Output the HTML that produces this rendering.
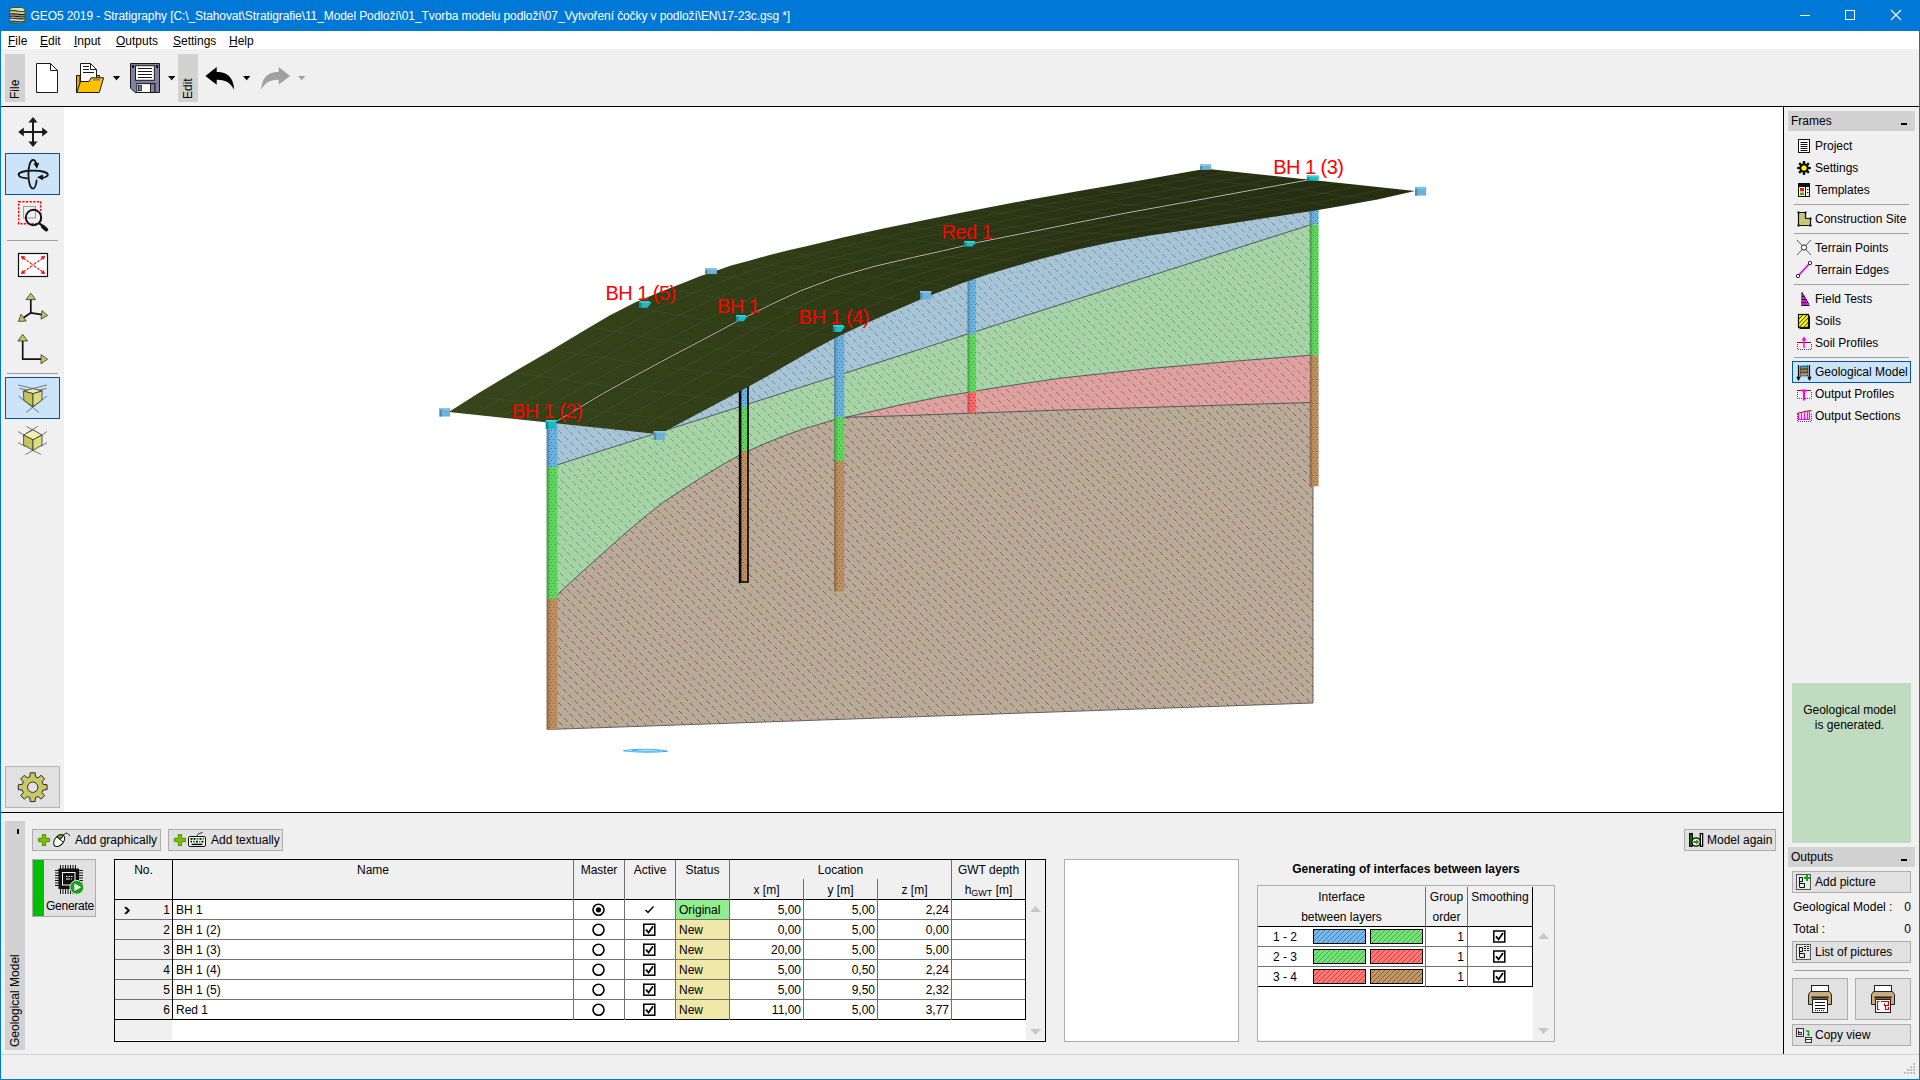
<!DOCTYPE html>
<html lang="en">
<head>
<meta charset="utf-8">
<title>GEO5 2019 - Stratigraphy</title>
<style>
html,body{margin:0;padding:0;}
body{width:1920px;height:1080px;overflow:hidden;background:#f0f0f0;font-family:"Liberation Sans",sans-serif;font-size:12px;color:#000;position:relative;}
.abs{position:absolute;}
.t{position:absolute;white-space:nowrap;line-height:16px;height:16px;}
#titlebar{left:0;top:0;width:1920px;height:31px;background:#0078d7;}
#titletext{left:30.5px;top:8px;color:#fff;font-size:12px;letter-spacing:-0.097px;}
#menubar{left:1px;top:31px;width:1918px;height:18px;background:#fff;}
#menubar .t{top:2px;}
#menubar .m::first-letter{text-decoration:underline;text-underline-offset:1px;}
#toolbar{left:1px;top:50px;width:1918px;height:56px;background:#f0f0f0;}
.hline{position:absolute;height:1px;background:#000;}
.vline{position:absolute;width:1px;background:#000;}
.tab{position:absolute;background:#d2d2d2;}
.vt{position:absolute;white-space:nowrap;transform-origin:0 0;transform:rotate(-90deg);line-height:16px;height:16px;}
#lefttb{left:1px;top:107px;width:63px;height:705px;background:#f0f0f0;}
#view{left:64px;top:107px;width:1719px;height:705px;background:#fff;}
#rightp{left:1784px;top:107px;width:135px;height:946px;background:#f0f0f0;}
#bottomp{left:1px;top:813px;width:1782px;height:240px;background:#f0f0f0;}
#status{left:1px;top:1054px;width:1918px;height:25px;background:#f0f0f0;border-top:1px solid #d2d2d2;box-sizing:border-box;}
.bl{position:absolute;background:#0078d7;}
.btn{position:absolute;background:#e1e1e1;border:1px solid #adadad;box-sizing:border-box;}
.sel{position:absolute;background:#cce4f7;border:1px solid #005499;box-sizing:border-box;}
.fi{left:31px;}
.sep{position:absolute;height:1px;background:#a0a0a0;}
</style>
</head>
<body>
<!-- TITLE BAR -->
<div id="titlebar" class="abs">
  <svg class="abs" style="left:0;top:0" width="1920" height="31" viewBox="0 0 1920 31">
    <defs><clipPath id="icoclip"><rect x="9.5" y="7.5" width="15.5" height="15.5" rx="3.2"/></clipPath></defs>
    <rect x="9.5" y="7.5" width="15.5" height="15.5" rx="3.4" fill="#16180f"/>
    <g clip-path="url(#icoclip)">
      <path d="M9 7H26V10.6Q21 11.4 17 10.4T9 10.4Z" fill="#dcdfba"/>
      <path d="M9 11.4Q13 10.6 17 11.4T26 11.6V13.6Q21 14.4 17 13.6T9 13.6Z" fill="#c6cf8c"/>
      <path d="M9 14.5Q13 13.9 17 14.6T26 14.6V16Q21 16.8 17 16.1T9 16.1Z" fill="#8e8e8e"/>
      <path d="M9 16.9Q13 16.3 17 17T26 16.9V18.2Q21 18.9 17 18.3T9 18.4Z" fill="#a4a4a4"/>
      <path d="M9 19.2Q13 18.5 17 19.2T26 19.1V20.8Q21 21.6 17 20.9T9 21Z" fill="#dedede"/>
      <path d="M9 21.8Q13 21.2 17 21.8T26 21.7V24H9Z" fill="#9a9a9a"/>
    </g>
    <rect x="9.5" y="7.5" width="15.5" height="15.5" rx="3.4" fill="none" stroke="#2c5c14" stroke-width="0.9"/>
    <path d="M1800 15.5H1810" stroke="#fff" stroke-width="1"/>
    <rect x="1845.5" y="10.5" width="9" height="9" fill="none" stroke="#fff" stroke-width="1"/>
    <path d="M1891 10L1901 20M1901 10L1891 20" stroke="#fff" stroke-width="1.1"/>
  </svg>
  <div id="titletext" class="t">GEO5 2019 - Stratigraphy [C:\_Stahovat\Stratigrafie\11_Model Podloží\01_Tvorba modelu podloží\07_Vytvoření čočky v podloží\EN\17-23c.gsg *]</div>
</div>
<!-- MENU BAR -->
<div id="menubar" class="abs">
  <div class="t m" style="left:7px">File</div>
  <div class="t m" style="left:39px">Edit</div>
  <div class="t m" style="left:73px">Input</div>
  <div class="t m" style="left:115px">Outputs</div>
  <div class="t m" style="left:172px">Settings</div>
  <div class="t m" style="left:228px">Help</div>
</div>
<!-- TOOLBAR -->
<div id="toolbar" class="abs">
  <div class="tab" style="left:4px;top:4px;width:20px;height:48px"></div>
  <div class="vt" style="left:6px;top:49px">File</div>
  <div class="tab" style="left:177px;top:4px;width:20px;height:48px"></div>
  <div class="vt" style="left:179px;top:49px">Edit</div>
  <svg class="abs" style="left:-1px;top:0" width="400" height="56" viewBox="0 50 400 56">
    <!-- new -->
    <path d="M36.5 63.5H50.5L57.5 70.5V92.5H36.5Z" fill="#fff" stroke="#1a1a1a" stroke-width="1"/>
    <path d="M50.5 63.5V70.5H57.5" fill="none" stroke="#1a1a1a" stroke-width="1"/>
    <!-- open -->
    <path d="M76.5 75.5H99.5V79H76.5Z" fill="#e9a400" stroke="#1a1a1a" stroke-width="1"/>
    <path d="M76.5 75.5V92.5H80V75.5Z" fill="#e9a400" stroke="#1a1a1a" stroke-width="1"/>
    <path d="M80.5 63.5H90.5L96.5 69.5V84H80.5Z" fill="#fff" stroke="#1a1a1a" stroke-width="1"/>
    <path d="M90.5 63.5V69.5H96.5" fill="none" stroke="#1a1a1a" stroke-width="1"/>
    <path d="M83 66.5H89M83 69.5H89M83 72.5H94" stroke="#1a1a1a" stroke-width="1"/>
    <path d="M76.8 92.5L80.5 81.5H89L91 77.8H103.6L99.3 92.5Z" fill="#ffc000" stroke="#1a1a1a" stroke-width="1" stroke-linejoin="round"/>
    <rect x="93" y="79" width="7" height="1.6" fill="#8080a0"/>
    <path d="M112.8 76H120.2L116.5 80.3Z" fill="#000"/>
    <!-- save -->
    <path d="M130.5 63.5H159.5V92.5H135L130.5 88Z" fill="#8080a0" stroke="#1a1a1a" stroke-width="1"/>
    <rect x="135.5" y="65.7" width="18.8" height="14.6" fill="#fff" stroke="#1a1a1a" stroke-width="1"/>
    <path d="M138 68.5H152M138 71.5H152M138 74.5H152M138 77.5H152" stroke="#1a1a1a" stroke-width="1"/>
    <rect x="132" y="65" width="1.8" height="3" fill="#000"/><rect x="156.2" y="65" width="1.8" height="3" fill="#000"/>
    <rect x="136.8" y="83.6" width="18" height="8.9" fill="#fff" stroke="#1a1a1a" stroke-width="1"/>
    <rect x="138.5" y="85.3" width="2.8" height="5.4" fill="#8080a0" stroke="#1a1a1a" stroke-width="0.9"/>
    <rect x="150.5" y="83.6" width="4.3" height="8.9" fill="#8080a0" stroke="#1a1a1a" stroke-width="1"/>
    <path d="M168 76H175.4L171.7 80.3Z" fill="#000"/>
    <!-- undo -->
    <path d="M205.4 76.1L216.7 66.9V71.9C226 71.5 233.5 76 234.2 89.8C230.5 83 226 79.6 216.7 79.8V84.8Z" fill="#000"/>
    <path d="M243 76H250.4L246.7 80.3Z" fill="#000"/>
    <!-- redo -->
    <path d="M290 76.1L278.7 66.9V71.9C269.4 71.5 261.9 76 261.2 89.8C264.9 83 269.4 79.6 278.7 79.8V84.8Z" fill="#a0a0a0"/>
    <path d="M298 76H305.4L301.7 80.3Z" fill="#a0a0a0"/>
  </svg>
</div>
<div class="hline" style="left:1px;top:106px;width:1918px"></div>
<!-- LEFT TOOLBAR -->
<div id="lefttb" class="abs">
  <div class="sel" style="left:4px;top:46px;width:55px;height:42px"></div>
  <div class="sel" style="left:4px;top:270px;width:55px;height:42px"></div>
  <div class="sep" style="left:6px;top:133px;width:51px"></div>
  <div class="sep" style="left:6px;top:266px;width:51px"></div>
  <div class="btn" style="left:4px;top:659px;width:55px;height:42px;border-color:#b4b4b4"></div>
  <svg class="abs" style="left:-1px;top:0" width="64" height="705" viewBox="0 107 64 705">
    <!-- move -->
    <g fill="#1a1a1a" stroke="none">
      <path d="M32 121.5H34V142.5H32Z"/><path d="M22.5 131H43.5V133H22.5Z"/>
      <path d="M33 117L37.6 122.6H28.4Z"/><path d="M33 147L37.6 141.4H28.4Z"/>
      <path d="M18.2 132L23.8 127.4V136.6Z"/><path d="M47.8 132L42.2 127.4V136.6Z"/>
    </g>
    <!-- rotate -->
    <g fill="none" stroke="#111" stroke-width="1.8" stroke-linecap="round">
      <path d="M41 178.2C45.5 177.4 47.8 176 47.8 174.7C47.8 172.3 41.5 170.7 33 170.7C24.5 170.7 18.6 172.4 18.6 174.7C18.6 176.5 22 177.8 27 178.3"/>
      <path d="M36.2 163.5C35.5 161.2 34.3 159.8 33 159.8C30.4 159.8 28.4 166 28.4 174.2C28.4 182.4 30.4 188.6 33 188.6C34.7 188.6 36 185.5 36.6 180.5"/>
    </g>
    <path d="M33.4 163.4L39.2 162.8L37 168.8Z" fill="#111"/>
    <path d="M37 177.3L42.8 174.4L43 180.3Z" fill="#111"/>
    <!-- zoom window -->
    <rect x="18.7" y="201.7" width="22" height="22" fill="none" stroke="#f00" stroke-width="1.4" stroke-dasharray="2.2 1.45"/>
    <rect x="23.5" y="206.5" width="12" height="11.5" fill="none" stroke="#a0a0a0" stroke-width="1.1"/>
    <circle cx="33.5" cy="217.5" r="7.7" fill="none" stroke="#111" stroke-width="1.9"/>
    <path d="M39.3 223.3L43 226.6" stroke="#111" stroke-width="2" stroke-linecap="round"/>
    <path d="M42.8 226.5L46.3 229.6" stroke="#111" stroke-width="3.8" stroke-linecap="round"/>
    <!-- fit -->
    <rect x="18.5" y="253.5" width="29" height="23" fill="#fff" stroke="#111" stroke-width="1.2"/>
    <g stroke="#f00" stroke-width="1.1" stroke-dasharray="2.2 1.4" fill="none">
      <path d="M31.5 263.8L23 258M34.5 263.8L43 258M31.5 266.2L23 272M34.5 266.2L43 272"/>
    </g>
    <g fill="#f00"><path d="M20.8 256L25.4 256.6L22.6 260Z"/><path d="M45.2 256L40.6 256.6L43.4 260Z"/><path d="M20.8 274L25.4 273.4L22.6 270Z"/><path d="M45.2 274L40.6 273.4L43.4 270Z"/></g>
    <path d="M32 263.8V266.2M34 263.8V266.2" stroke="#f00" stroke-width="0.9"/>
    <!-- 3 axis -->
    <g stroke="#111" stroke-width="1.7" fill="none" stroke-linecap="round"><path d="M30.8 312.8V299M30.8 312.8L22.5 318.5M30.8 312.8L42 314.6"/></g>
    <g fill="#c4c45c" stroke="#333" stroke-width="0.8" stroke-linejoin="round">
      <path d="M30.8 293.2L35.6 299.6H26Z"/><path d="M18.4 321.4L21 314.2L26.2 321Z"/><path d="M47.6 315.4L41 319.2L42 310.6Z"/>
    </g>
    <!-- L axis -->
    <path d="M22.7 340.5V359.2H41" stroke="#111" stroke-width="1.7" fill="none"/>
    <g fill="#c4c45c" stroke="#333" stroke-width="0.8" stroke-linejoin="round">
      <path d="M22.7 334.4L27.6 341H17.8Z"/><path d="M47.6 359.2L41 363.8V354.6Z"/>
    </g>
    <!-- perspective cube -->
    <g stroke="#555" stroke-width="0.8" fill="none">
      <path d="M18 385L33 388.5L47 385M19.5 388.5L33 391.2L46.5 388.5M18.5 396L39 412.5M47 396L26 412.5"/>
    </g>
    <g stroke="#333" stroke-width="0.8" stroke-linejoin="round">
      <path d="M23.5 391.2L33 388.6L42.2 391L33 393.6Z" fill="#f0f0b0"/>
      <path d="M23.5 391.2L33 393.6V406.6L23.8 400.4Z" fill="#c4c45c"/>
      <path d="M42.2 391L33 393.6V406.6L41.8 400.2Z" fill="#dcdc80"/>
    </g>
    <!-- iso cube -->
    <g stroke="#555" stroke-width="0.8" fill="none">
      <path d="M26.5 426.5L39 433.5M37.5 426.5L26 433.5M18 431.5L24 435M47 431.5L42 435M18 442.5L25 446.5M47 442.5L41 446.5M25.5 454.5L33 450.4L41 454.5"/>
    </g>
    <g stroke="#333" stroke-width="0.8" stroke-linejoin="round">
      <path d="M23.6 435L33 429.8L42 435L33 439.8Z" fill="#f0f0b0"/>
      <path d="M23.6 435L33 439.8V450.4L23.6 445Z" fill="#c4c45c"/>
      <path d="M42 435L33 439.8V450.4L42 445Z" fill="#dcdc80"/>
    </g>
    <!-- gear -->
    <g transform="translate(32.7 787.2)">
      <path d="M-2.78 -10.44L-2.47 -14.39L2.47 -14.39L2.78 -10.44L5.42 -9.34L8.43 -11.92L11.92 -8.43L9.34 -5.42L10.44 -2.78L14.39 -2.47L14.39 2.47L10.44 2.78L9.34 5.42L11.92 8.43L8.43 11.92L5.42 9.34L2.78 10.44L2.47 14.39L-2.47 14.39L-2.78 10.44L-5.42 9.34L-8.43 11.92L-11.92 8.43L-9.34 5.42L-10.44 2.78L-14.39 2.47L-14.39 -2.47L-10.44 -2.78L-9.34 -5.42L-11.92 -8.43L-8.43 -11.92L-5.42 -9.34Z M5.2 0A5.2 5.2 0 1 0 -5.2 0A5.2 5.2 0 1 0 5.2 0Z" fill="#c8c864" stroke="#2a2a2a" stroke-width="1" stroke-linejoin="round" fill-rule="evenodd"/>
    </g>
  </svg>
</div>
<!-- 3D VIEW -->
<div id="view" class="abs">
<svg class="abs" style="left:0;top:0" width="1719" height="705" viewBox="64 107 1719 705">
<defs>
<pattern id="hb" width="7.6" height="13.8" patternUnits="userSpaceOnUse" patternTransform="rotate(45)"><path d="M0 0.5H5.2M3.6 7.4H7.6M0 7.4H1.2" stroke="#4a86b4" stroke-width="0.9"/></pattern>
<pattern id="hg" width="7.6" height="13.8" patternUnits="userSpaceOnUse" patternTransform="rotate(45)"><path d="M0 0.5H5.2M3.6 7.4H7.6M0 7.4H1.2" stroke="#46a546" stroke-width="0.9"/></pattern>
<pattern id="hr" width="7.6" height="13.8" patternUnits="userSpaceOnUse" patternTransform="rotate(45)"><path d="M0 0.5H5.2M3.6 7.4H7.6M0 7.4H1.2" stroke="#c84646" stroke-width="0.9"/></pattern>
<pattern id="hn" width="7.6" height="13.8" patternUnits="userSpaceOnUse" patternTransform="rotate(45)"><path d="M0 0.5H5.2M3.6 7.4H7.6M0 7.4H1.2" stroke="#73532c" stroke-width="0.9"/></pattern>
<pattern id="db" width="4" height="6" patternUnits="userSpaceOnUse"><rect x="1" y="1" width="1" height="1" fill="#1f7ed0"/><rect x="3" y="4" width="1" height="1" fill="#1f7ed0"/></pattern>
<pattern id="dg" width="4" height="6" patternUnits="userSpaceOnUse"><rect x="1" y="1" width="1" height="1" fill="#18b818"/><rect x="3" y="4" width="1" height="1" fill="#18b818"/></pattern>
<pattern id="dr" width="4" height="6" patternUnits="userSpaceOnUse"><rect x="1" y="1" width="1" height="1" fill="#e81818"/><rect x="3" y="4" width="1" height="1" fill="#e81818"/></pattern>
<pattern id="dn" width="4" height="6" patternUnits="userSpaceOnUse"><rect x="1" y="1" width="1" height="1" fill="#a05c14"/><rect x="3" y="4" width="1" height="1" fill="#a05c14"/></pattern>
<linearGradient id="tg" gradientUnits="userSpaceOnUse" x1="450" y1="0" x2="1415" y2="0"><stop offset="0" stop-color="#36451a"/><stop offset="0.35" stop-color="#303d16"/><stop offset="0.7" stop-color="#283212"/><stop offset="1" stop-color="#252e10"/></linearGradient>
<linearGradient id="bhs" x1="0" y1="0" x2="1" y2="0"><stop offset="0" stop-color="#000" stop-opacity="0.32"/><stop offset="0.22" stop-color="#000" stop-opacity="0.1"/><stop offset="0.4" stop-color="#000" stop-opacity="0"/></linearGradient>
</defs>
<defs><path id="hl" d="M-9.66 172.34l570 570M-1.58 171.42l570 570M10.26 173.26l570 570M21.10 175.10l570 570M26.50 170.50l570 570M35.50 170.50l570 570M48.18 174.18l570 570M54.50 170.50l570 570M65.34 172.34l570 570M77.18 174.18l570 570M82.50 170.50l570 570M95.18 174.18l570 570M102.42 171.42l570 570M110.50 170.50l570 570M120.50 170.50l570 570M132.26 173.26l570 570M141.26 173.26l570 570M148.50 170.50l570 570M158.42 171.42l570 570M167.50 170.50l570 570M180.18 174.18l570 570M188.26 173.26l570 570M195.50 170.50l570 570M208.18 174.18l570 570M214.50 170.50l570 570M224.42 171.42l570 570M237.10 175.10l570 570M247.10 175.10l570 570M255.18 174.18l570 570M261.50 170.50l570 570M274.18 174.18l570 570M283.18 174.18l570 570M292.26 173.26l570 570M298.50 170.50l570 570M309.42 171.42l570 570M317.50 170.50l570 570M330.18 174.18l570 570M337.42 171.42l570 570M347.34 172.34l570 570M358.26 173.26l570 570M365.42 171.42l570 570M377.18 174.18l570 570M383.50 170.50l570 570M396.18 174.18l570 570M404.34 172.34l570 570M415.18 174.18l570 570M425.10 175.10l570 570M431.42 171.42l570 570M439.50 170.50l570 570M453.18 174.18l570 570M462.18 174.18l570 570M472.10 175.10l570 570M478.42 171.42l570 570M488.34 172.34l570 570M496.50 170.50l570 570M509.18 174.18l570 570M519.10 175.10l570 570M524.50 170.50l570 570M537.18 174.18l570 570M543.50 170.50l570 570M556.18 174.18l570 570M562.42 171.42l570 570M574.26 173.26l570 570M585.10 175.10l570 570M594.18 174.18l570 570M602.26 173.26l570 570M610.34 172.34l570 570M621.26 173.26l570 570M631.18 174.18l570 570M640.26 173.26l570 570M648.34 172.34l570 570M657.34 172.34l570 570M666.42 171.42l570 570M675.42 171.42l570 570M689.10 175.10l570 570M694.42 171.42l570 570M702.50 170.50l570 570M716.18 174.18l570 570M723.34 172.34l570 570M735.18 174.18l570 570M743.26 173.26l570 570M751.34 172.34l570 570M764.10 175.10l570 570M771.26 173.26l570 570M780.34 172.34l570 570M791.18 174.18l570 570M796.50 170.50l570 570M806.50 170.50l570 570M819.18 174.18l570 570M828.26 173.26l570 570M835.42 171.42l570 570M845.34 172.34l570 570M854.42 171.42l570 570M865.26 173.26l570 570M875.26 173.26l570 570M881.50 170.50l570 570M895.10 175.10l570 570M900.50 170.50l570 570M913.18 174.18l570 570M923.18 174.18l570 570M930.34 172.34l570 570M939.34 172.34l570 570M952.10 175.10l570 570M958.34 172.34l570 570M970.18 174.18l570 570M978.26 173.26l570 570M988.18 174.18l570 570M997.26 173.26l570 570M1003.50 170.50l570 570M1013.50 170.50l570 570M1024.34 172.34l570 570M1034.26 173.26l570 570M1046.10 175.10l570 570M1055.10 175.10l570 570M1060.50 170.50l570 570M1069.50 170.50l570 570M1083.10 175.10l570 570M1093.10 175.10l570 570M1099.34 172.34l570 570M1112.10 175.10l570 570M1120.18 174.18l570 570M1130.10 175.10l570 570M1138.26 173.26l570 570M1146.34 172.34l570 570M1159.10 175.10l570 570M1166.26 173.26l570 570M1177.10 175.10l570 570M1184.34 172.34l570 570M1191.50 170.50l570 570M1204.26 173.26l570 570M1212.34 172.34l570 570M1220.42 171.42l570 570M1233.18 174.18l570 570M1238.50 170.50l570 570M1251.26 173.26l570 570M1257.50 170.50l570 570M1267.42 171.42l570 570M1278.34 172.34l570 570M1286.42 171.42l570 570M1300.10 175.10l570 570M1305.42 171.42l570 570" fill="none" stroke-width="1" stroke-opacity="0.72" stroke-dasharray="5 3"/></defs>
<clipPath id="chn"><polygon points="548.0,423.0 558.8,420.0 602.5,393.8 640.0,373.1 680.0,351.6 690.0,346.6 736.5,321.8 770.0,305.0 800.0,291.0 837.5,276.9 875.0,266.2 912.5,257.5 943.8,250.6 977.5,242.5 1025.0,233.0 1075.0,223.0 1125.0,213.2 1187.5,201.9 1252.5,190.0 1308.0,180.0 1313.0,180.0 1313.0,703.0 548.0,729.5"/></clipPath>
<polygon points="548.0,423.0 558.8,420.0 602.5,393.8 640.0,373.1 680.0,351.6 690.0,346.6 736.5,321.8 770.0,305.0 800.0,291.0 837.5,276.9 875.0,266.2 912.5,257.5 943.8,250.6 977.5,242.5 1025.0,233.0 1075.0,223.0 1125.0,213.2 1187.5,201.9 1252.5,190.0 1308.0,180.0 1313.0,180.0 1313.0,703.0 548.0,729.5" fill="#b9aa99"/>
<use href="#hl" stroke="#6b4a24" clip-path="url(#chn)"/>
<clipPath id="chr"><polygon points="845.6,417.3 900.0,405.0 940.0,396.9 1000.0,387.0 1060.0,378.2 1150.0,368.5 1230.0,361.5 1313.0,355.0 1313.0,402.4 1060.0,410.1 1000.0,412.2 940.0,414.3 900.0,415.8 845.6,417.3"/></clipPath>
<polygon points="845.6,417.3 900.0,405.0 940.0,396.9 1000.0,387.0 1060.0,378.2 1150.0,368.5 1230.0,361.5 1313.0,355.0 1313.0,402.4 1060.0,410.1 1000.0,412.2 940.0,414.3 900.0,415.8 845.6,417.3" fill="#dba2a2"/>
<use href="#hl" stroke="#c23c3c" clip-path="url(#chr)"/>
<clipPath id="chg"><polygon points="548.0,467.8 1313.0,224.0 1313.0,355.0 1230.0,361.5 1150.0,368.5 1060.0,378.2 1000.0,387.0 940.0,396.9 900.0,405.0 845.6,417.3 835.4,419.4 804.9,428.5 784.5,435.7 764.1,443.8 739.7,455.0 723.4,464.2 703.0,476.4 682.6,489.6 662.2,502.9 641.9,519.2 621.5,536.5 601.1,554.8 580.7,573.2 557.3,594.6 548.0,598.5"/></clipPath>
<polygon points="548.0,467.8 1313.0,224.0 1313.0,355.0 1230.0,361.5 1150.0,368.5 1060.0,378.2 1000.0,387.0 940.0,396.9 900.0,405.0 845.6,417.3 835.4,419.4 804.9,428.5 784.5,435.7 764.1,443.8 739.7,455.0 723.4,464.2 703.0,476.4 682.6,489.6 662.2,502.9 641.9,519.2 621.5,536.5 601.1,554.8 580.7,573.2 557.3,594.6 548.0,598.5" fill="#a8d3a8"/>
<use href="#hl" stroke="#3f9f3f" clip-path="url(#chg)"/>
<clipPath id="chb"><polygon points="548.0,423.0 558.8,420.0 602.5,393.8 640.0,373.1 680.0,351.6 690.0,346.6 736.5,321.8 770.0,305.0 800.0,291.0 837.5,276.9 875.0,266.2 912.5,257.5 943.8,250.6 977.5,242.5 1025.0,233.0 1075.0,223.0 1125.0,213.2 1187.5,201.9 1252.5,190.0 1308.0,180.0 1313.0,180.0 1313.0,224.0 548.0,467.8"/></clipPath>
<polygon points="548.0,423.0 558.8,420.0 602.5,393.8 640.0,373.1 680.0,351.6 690.0,346.6 736.5,321.8 770.0,305.0 800.0,291.0 837.5,276.9 875.0,266.2 912.5,257.5 943.8,250.6 977.5,242.5 1025.0,233.0 1075.0,223.0 1125.0,213.2 1187.5,201.9 1252.5,190.0 1308.0,180.0 1313.0,180.0 1313.0,224.0 548.0,467.8" fill="#a8c3d3"/>
<use href="#hl" stroke="#3f7fb0" clip-path="url(#chb)"/>
<polyline points="548.0,467.8 1313.0,224.0" fill="none" stroke="#3c4448" stroke-width="0.8"/>
<polyline points="548.0,598.5 557.3,594.6 580.7,573.2 601.1,554.8 621.5,536.5 641.9,519.2 662.2,502.9 682.6,489.6 703.0,476.4 723.4,464.2 739.7,455.0 764.1,443.8 784.5,435.7 804.9,428.5 835.4,419.4 845.6,417.3" fill="none" stroke="#3c4448" stroke-width="0.8"/>
<polyline points="845.6,417.3 900.0,405.0 940.0,396.9 1000.0,387.0 1060.0,378.2 1150.0,368.5 1230.0,361.5 1313.0,355.0" fill="none" stroke="#3c4448" stroke-width="0.8"/>
<polyline points="845.6,417.3 900.0,415.8 940.0,414.3 1000.0,412.2 1060.0,410.1 1313.0,402.4" fill="none" stroke="#3c4448" stroke-width="0.8"/>
<polyline points="548.0,729.5 1313.0,703.0 1313.0,486.0" fill="none" stroke="#555" stroke-width="0.9"/>
<rect x="546.6" y="420.0" width="10.7" height="47.3" fill="#6bb1de"/>
<rect x="548.1" y="420.0" width="9.2" height="47.3" fill="url(#db)"/>
<rect x="546.6" y="467.3" width="10.7" height="131.4" fill="#5fd45f"/>
<rect x="548.1" y="467.3" width="9.2" height="131.4" fill="url(#dg)"/>
<rect x="546.6" y="598.7" width="10.7" height="131.1" fill="#bc8e60"/>
<rect x="548.1" y="598.7" width="9.2" height="131.1" fill="url(#dn)"/>
<rect x="546.6" y="420.0" width="10.7" height="309.8" fill="url(#bhs)"/>
<rect x="739.3" y="330.0" width="9.1" height="77.0" fill="#6bb1de"/>
<rect x="740.8" y="330.0" width="7.6" height="77.0" fill="url(#db)"/>
<rect x="739.3" y="407.0" width="9.1" height="44.0" fill="#5fd45f"/>
<rect x="740.8" y="407.0" width="7.6" height="44.0" fill="url(#dg)"/>
<rect x="739.3" y="451.0" width="9.1" height="131.4" fill="#bc8e60"/>
<rect x="740.8" y="451.0" width="7.6" height="131.4" fill="url(#dn)"/>
<rect x="739.3" y="330.0" width="9.1" height="252.4" fill="url(#bhs)"/>
<path d="M739.7 330.0V582.0H748.0V330.0" fill="none" stroke="#000" stroke-width="1.6"/>
<path d="M740.1 330.0V582.4" fill="none" stroke="#000" stroke-width="2.4"/>
<rect x="967.6" y="246.0" width="8.2" height="88.4" fill="#6bb1de"/>
<rect x="969.1" y="246.0" width="6.7" height="88.4" fill="url(#db)"/>
<rect x="967.6" y="334.4" width="8.2" height="57.6" fill="#5fd45f"/>
<rect x="969.1" y="334.4" width="6.7" height="57.6" fill="url(#dg)"/>
<rect x="967.6" y="392.0" width="8.2" height="21.2" fill="#fa6868"/>
<rect x="969.1" y="392.0" width="6.7" height="21.2" fill="url(#dr)"/>
<rect x="967.6" y="246.0" width="8.2" height="167.2" fill="url(#bhs)"/>
<rect x="1309.8" y="182.0" width="8.8" height="42.6" fill="#6bb1de"/>
<rect x="1311.3" y="182.0" width="7.3" height="42.6" fill="url(#db)"/>
<rect x="1309.8" y="224.6" width="8.8" height="130.8" fill="#5fd45f"/>
<rect x="1311.3" y="224.6" width="7.3" height="130.8" fill="url(#dg)"/>
<rect x="1309.8" y="355.4" width="8.8" height="131.0" fill="#bc8e60"/>
<rect x="1311.3" y="355.4" width="7.3" height="131.0" fill="url(#dn)"/>
<rect x="1309.8" y="182.0" width="8.8" height="304.4" fill="url(#bhs)"/>
<rect x="834.2" y="333.0" width="10.0" height="84.3" fill="#6bb1de"/>
<rect x="835.7" y="333.0" width="8.5" height="84.3" fill="url(#db)"/>
<rect x="834.2" y="417.3" width="10.0" height="43.7" fill="#5fd45f"/>
<rect x="835.7" y="417.3" width="8.5" height="43.7" fill="url(#dg)"/>
<rect x="834.2" y="461.0" width="10.0" height="130.5" fill="#bc8e60"/>
<rect x="835.7" y="461.0" width="8.5" height="130.5" fill="url(#dn)"/>
<rect x="834.2" y="333.0" width="10.0" height="258.5" fill="url(#bhs)"/>
<polygon points="448.8,411.9 477.5,393.8 515.0,371.2 552.5,349.4 585.0,330.0 610.0,315.3 635.0,302.5 660.0,291.9 685.0,282.3 700.0,276.2 716.9,270.6 731.2,265.6 750.0,260.4 768.8,255.3 787.5,250.6 806.2,246.2 820.0,243.1 841.7,237.8 883.3,228.4 925.0,220.0 961.0,212.8 1025.0,200.4 1087.5,189.6 1140.0,180.6 1190.0,171.6 1206.2,168.8 1415.0,191.0 1377.5,199.4 1340.0,206.2 1315.0,210.6 1277.5,216.2 1240.0,221.9 1187.5,230.0 1150.0,235.6 1112.5,241.9 1075.0,250.0 1038.5,259.6 1012.5,266.9 987.5,274.4 962.5,283.1 925.0,297.5 887.5,313.8 862.5,325.0 838.0,336.6 815.0,348.8 790.0,363.1 765.0,377.5 740.0,391.2 702.5,411.2 665.0,431.2 659.5,434.2" fill="url(#tg)"/>
<polyline points="474.3,414.8 487.1,407.1 500.0,399.1 512.8,391.3 525.7,383.6 538.5,376.1 551.3,368.7 564.2,361.3 577.0,353.9 589.8,346.5 602.7,339.0 615.5,331.7 628.4,324.3 641.2,317.2 654.0,310.6 666.9,304.4 679.7,298.7 692.5,293.3 705.4,288.1 718.2,282.8 731.0,277.8 743.9,273.4 756.7,268.8 769.6,265.2 782.4,261.6 795.2,258.1 808.1,254.9 820.9,251.8 833.7,248.9 846.6,245.9 859.4,242.9 872.3,239.8 885.1,236.9 897.9,234.0 910.8,231.1 923.6,228.6 936.4,226.0 949.3,223.4 962.1,220.8 975.0,218.3 987.8,215.7 1000.6,213.2 1013.5,210.7 1026.3,208.2 1039.1,205.7 1052.0,203.3 1064.8,201.0 1077.6,198.8 1090.5,196.5 1103.3,194.3 1116.2,192.0 1129.0,189.8 1141.8,187.6 1154.7,185.3 1167.5,183.1 1180.3,180.8 1193.2,178.4 1206.0,176.1 1218.9,173.8 1231.7,171.6" fill="none" stroke="#6a7478" stroke-opacity="0.22" stroke-width="0.8"/>
<polyline points="578.1,426.2 590.9,419.6 603.8,412.1 616.6,404.6 629.4,397.1 642.2,390.1 655.1,383.1 667.9,376.1 680.7,369.1 693.5,362.1 706.4,355.1 719.2,348.4 732.0,341.4 744.8,334.6 757.7,327.8 770.5,321.3 783.3,314.9 796.1,308.7 809.0,302.7 821.8,296.9 834.6,291.5 847.4,286.5 860.3,281.7 873.1,277.4 885.9,273.5 898.7,269.7 911.6,266.2 924.4,263.0 937.2,259.9 950.0,256.8 962.8,253.8 975.7,250.8 988.5,247.6 1001.3,244.6 1014.1,241.8 1027.0,239.2 1039.8,236.7 1052.6,234.2 1065.4,231.8 1078.3,229.4 1091.1,227.0 1103.9,224.6 1116.7,222.2 1129.6,219.8 1142.4,217.4 1155.2,215.1 1168.0,212.9 1180.9,210.6 1193.7,208.4 1206.5,206.2 1219.3,204.0 1232.2,201.7 1245.0,199.4 1257.8,197.1 1270.6,194.7 1283.5,192.4 1296.3,190.1 1309.1,187.7 1321.9,185.2 1334.8,182.8" fill="none" stroke="#6a7478" stroke-opacity="0.22" stroke-width="0.8"/>
<polyline points="499.9,417.7 512.7,410.4 525.5,402.5 538.4,394.7 551.2,387.0 564.0,379.6 576.9,372.3 589.7,365.1 602.6,357.9 615.4,350.6 628.2,343.3 641.1,336.3 653.9,329.1 666.7,322.1 679.6,315.4 692.4,309.1 705.2,303.1 718.1,297.3 730.9,291.9 743.7,286.3 756.6,281.3 769.4,276.7 782.2,272.1 795.1,268.3 807.9,264.7 820.7,261.1 833.6,257.9 846.4,254.9 859.2,251.9 872.1,249.0 884.9,246.0 897.8,243.0 910.6,240.0 923.4,237.0 936.3,234.3 949.1,231.7 961.9,229.1 974.8,226.5 987.6,224.0 1000.4,221.4 1013.3,218.9 1026.1,216.3 1038.9,213.8 1051.8,211.3 1064.6,208.8 1077.4,206.4 1090.3,204.1 1103.1,201.8 1115.9,199.6 1128.8,197.3 1141.6,195.0 1154.4,192.7 1167.3,190.5 1180.1,188.2 1193.0,185.9 1205.8,183.6 1218.6,181.3 1231.5,179.0 1244.3,176.7 1257.1,174.4" fill="none" stroke="#6a7478" stroke-opacity="0.22" stroke-width="0.8"/>
<polyline points="605.2,428.9 618.1,422.2 630.9,414.9 643.7,407.6 656.5,400.4 669.3,393.4 682.2,386.5 695.0,379.4 707.8,372.5 720.6,365.4 733.4,358.2 746.2,351.3 759.1,344.2 771.9,337.4 784.7,330.6 797.5,324.2 810.3,318.0 823.2,311.9 836.0,306.0 848.8,300.3 861.6,294.9 874.4,289.8 887.2,284.9 900.1,280.4 912.9,276.2 925.7,272.2 938.5,268.5 951.3,265.0 964.1,261.7 977.0,258.5 989.8,255.3 1002.6,252.1 1015.4,248.9 1028.2,245.9 1041.1,243.1 1053.9,240.5 1066.7,238.0 1079.5,235.6 1092.3,233.3 1105.1,231.0 1118.0,228.8 1130.8,226.5 1143.6,224.3 1156.4,222.0 1169.2,219.8 1182.1,217.6 1194.9,215.4 1207.7,213.3 1220.5,211.2 1233.3,209.1 1246.1,206.9 1259.0,204.8 1271.8,202.5 1284.6,200.3 1297.4,197.9 1310.2,195.6 1323.0,193.3 1335.9,190.7 1348.7,188.1 1361.5,185.5" fill="none" stroke="#6a7478" stroke-opacity="0.22" stroke-width="0.8"/>
<polyline points="525.4,420.6 538.3,413.7 551.1,405.9 563.9,398.1 576.8,390.4 589.6,383.2 602.4,376.0 615.3,368.9 628.1,361.8 640.9,354.7 653.8,347.7 666.6,340.9 679.4,333.8 692.3,326.9 705.1,320.2 717.9,313.7 730.8,307.5 743.6,301.4 756.4,295.6 769.3,289.9 782.1,284.7 794.9,280.0 807.8,275.3 820.6,271.4 833.4,267.7 846.3,264.1 859.1,261.0 871.9,258.0 884.8,255.0 897.6,252.1 910.4,249.2 923.2,246.2 936.1,243.2 948.9,240.1 961.7,237.4 974.6,234.8 987.4,232.3 1000.2,229.7 1013.1,227.1 1025.9,224.6 1038.7,222.0 1051.6,219.5 1064.4,217.0 1077.2,214.4 1090.1,211.9 1102.9,209.5 1115.7,207.2 1128.6,204.9 1141.4,202.6 1154.2,200.3 1167.1,198.0 1179.9,195.7 1192.7,193.4 1205.6,191.1 1218.4,188.7 1231.2,186.4 1244.1,184.1 1256.9,181.8 1269.7,179.5 1282.6,177.2" fill="none" stroke="#6a7478" stroke-opacity="0.22" stroke-width="0.8"/>
<polyline points="632.4,431.5 645.2,424.8 658.0,417.7 670.8,410.7 683.6,403.6 696.4,396.7 709.2,389.8 722.1,382.8 734.9,375.8 747.7,368.6 760.5,361.4 773.3,354.2 786.1,347.0 798.9,340.2 811.7,333.4 824.5,327.2 837.4,321.1 850.2,315.2 863.0,309.4 875.8,303.7 888.6,298.2 901.4,293.0 914.2,288.1 927.0,283.4 939.8,278.9 952.7,274.6 965.5,270.7 978.3,267.1 991.1,263.5 1003.9,260.1 1016.7,256.8 1029.5,253.5 1042.3,250.2 1055.2,247.2 1068.0,244.4 1080.8,241.7 1093.6,239.3 1106.4,237.0 1119.2,234.8 1132.0,232.6 1144.8,230.6 1157.6,228.5 1170.5,226.4 1183.3,224.3 1196.1,222.2 1208.9,220.1 1221.7,218.0 1234.5,216.0 1247.3,214.0 1260.1,211.9 1272.9,209.9 1285.8,207.9 1298.6,205.7 1311.4,203.4 1324.2,201.1 1337.0,198.7 1349.8,196.4 1362.6,193.7 1375.4,191.0 1388.2,188.2" fill="none" stroke="#6a7478" stroke-opacity="0.22" stroke-width="0.8"/>
<polyline points="474.4,395.7 576.7,409.3 685.1,420.5" fill="none" stroke="#6a7478" stroke-opacity="0.18" stroke-width="0.8"/>
<polyline points="512.9,372.5 615.2,386.8 723.5,400.0" fill="none" stroke="#6a7478" stroke-opacity="0.18" stroke-width="0.8"/>
<polyline points="551.5,350.0 653.6,365.8 761.9,379.2" fill="none" stroke="#6a7478" stroke-opacity="0.18" stroke-width="0.8"/>
<polyline points="590.0,327.1 692.1,345.5 800.4,357.2" fill="none" stroke="#6a7478" stroke-opacity="0.18" stroke-width="0.8"/>
<polyline points="628.5,305.8 730.6,324.9 838.8,336.2" fill="none" stroke="#6a7478" stroke-opacity="0.18" stroke-width="0.8"/>
<polyline points="667.0,289.2 769.1,305.4 877.2,318.4" fill="none" stroke="#6a7478" stroke-opacity="0.18" stroke-width="0.8"/>
<polyline points="705.5,274.4 807.6,288.1 915.6,301.6" fill="none" stroke="#6a7478" stroke-opacity="0.18" stroke-width="0.8"/>
<polyline points="744.0,262.1 846.1,274.5 954.0,286.4" fill="none" stroke="#6a7478" stroke-opacity="0.18" stroke-width="0.8"/>
<polyline points="782.6,251.8 884.6,264.0 992.4,272.9" fill="none" stroke="#6a7478" stroke-opacity="0.18" stroke-width="0.8"/>
<polyline points="821.1,242.8 923.1,255.2 1030.8,261.7" fill="none" stroke="#6a7478" stroke-opacity="0.18" stroke-width="0.8"/>
<polyline points="859.6,233.8 961.6,246.3 1069.3,251.5" fill="none" stroke="#6a7478" stroke-opacity="0.18" stroke-width="0.8"/>
<polyline points="898.1,225.4 1000.1,238.0 1107.7,242.9" fill="none" stroke="#6a7478" stroke-opacity="0.18" stroke-width="0.8"/>
<polyline points="936.6,217.7 1038.6,230.3 1146.1,236.3" fill="none" stroke="#6a7478" stroke-opacity="0.18" stroke-width="0.8"/>
<polyline points="975.1,210.1 1077.1,222.6 1184.5,230.4" fill="none" stroke="#6a7478" stroke-opacity="0.18" stroke-width="0.8"/>
<polyline points="1013.7,202.6 1115.5,215.1 1222.9,224.5" fill="none" stroke="#6a7478" stroke-opacity="0.18" stroke-width="0.8"/>
<polyline points="1052.2,195.7 1154.0,208.0 1261.3,218.7" fill="none" stroke="#6a7478" stroke-opacity="0.18" stroke-width="0.8"/>
<polyline points="1090.7,189.1 1192.5,201.0 1299.8,212.9" fill="none" stroke="#6a7478" stroke-opacity="0.18" stroke-width="0.8"/>
<polyline points="1129.2,182.4 1231.0,193.9 1338.2,206.6" fill="none" stroke="#6a7478" stroke-opacity="0.18" stroke-width="0.8"/>
<polyline points="1167.7,175.6 1269.5,186.9 1376.6,199.6" fill="none" stroke="#6a7478" stroke-opacity="0.18" stroke-width="0.8"/>
<polyline points="551.0,423.5 558.8,420.0 602.5,393.8 640.0,373.1 680.0,351.6 690.0,346.6 736.5,321.8 770.0,305.0 800.0,291.0 837.5,276.9 875.0,266.2 912.5,257.5 943.8,250.6 977.5,242.5 1025.0,233.0 1075.0,223.0 1125.0,213.2 1187.5,201.9 1252.5,190.0 1308.0,180.0" fill="none" stroke="#1a1f10" stroke-width="2.2" stroke-opacity="0.6"/>
<polyline points="551.0,423.5 558.8,420.0 602.5,393.8 640.0,373.1 680.0,351.6 690.0,346.6 736.5,321.8 770.0,305.0 800.0,291.0 837.5,276.9 875.0,266.2 912.5,257.5 943.8,250.6 977.5,242.5 1025.0,233.0 1075.0,223.0 1125.0,213.2 1187.5,201.9 1252.5,190.0 1308.0,180.0" fill="none" stroke="#c8ccc0" stroke-width="0.9"/>
<rect x="439.5" y="408.0" width="10.5" height="8.5" fill="#6fb2d6"/>
<rect x="439.5" y="408.0" width="2.4" height="8.5" fill="#4f8eb4"/>
<rect x="439.5" y="408.0" width="10.5" height="1.6" fill="#8cc6e4"/>
<rect x="653.8" y="431.0" width="11.2" height="9.0" fill="#6fb2d6"/>
<rect x="653.8" y="431.0" width="2.4" height="9.0" fill="#4f8eb4"/>
<rect x="653.8" y="431.0" width="11.2" height="1.6" fill="#8cc6e4"/>
<rect x="705.0" y="268.1" width="11.9" height="5.9" fill="#6fb2d6"/>
<rect x="705.0" y="268.1" width="2.4" height="5.9" fill="#4f8eb4"/>
<rect x="705.0" y="268.1" width="11.9" height="1.6" fill="#8cc6e4"/>
<rect x="920.0" y="291.0" width="11.2" height="8.4" fill="#6fb2d6"/>
<rect x="920.0" y="291.0" width="2.4" height="8.4" fill="#4f8eb4"/>
<rect x="920.0" y="291.0" width="11.2" height="1.6" fill="#8cc6e4"/>
<rect x="1200.0" y="164.4" width="11.2" height="5.4" fill="#6fb2d6"/>
<rect x="1200.0" y="164.4" width="2.4" height="5.4" fill="#4f8eb4"/>
<rect x="1200.0" y="164.4" width="11.2" height="1.6" fill="#8cc6e4"/>
<rect x="1415.0" y="186.9" width="11.2" height="8.7" fill="#6fb2d6"/>
<rect x="1415.0" y="186.9" width="2.4" height="8.7" fill="#4f8eb4"/>
<rect x="1415.0" y="186.9" width="11.2" height="1.6" fill="#8cc6e4"/>
<path d="M639.5 301.3H649.3L651.3 302.9L647.3 307.8H639.5Z" fill="#1fb9c4"/>
<rect x="639.5" y="301.3" width="2.2" height="6.5" fill="#128890"/>
<rect x="639.5" y="301.3" width="9.8" height="1.4" fill="#42d4dc"/>
<path d="M736.2 315.0H745.5L747.5 316.6L743.5 321.2H736.2Z" fill="#1fb9c4"/>
<rect x="736.2" y="315.0" width="2.2" height="6.2" fill="#128890"/>
<rect x="736.2" y="315.0" width="9.2" height="1.4" fill="#42d4dc"/>
<path d="M833.1 325.0H843.0L845.0 326.6L841.0 331.9H833.1Z" fill="#1fb9c4"/>
<rect x="833.1" y="325.0" width="2.2" height="6.9" fill="#128890"/>
<rect x="833.1" y="325.0" width="9.9" height="1.4" fill="#42d4dc"/>
<path d="M964.4 241.0H974.2L976.2 242.6L972.2 246.4H964.4Z" fill="#1fb9c4"/>
<rect x="964.4" y="241.0" width="2.2" height="5.4" fill="#128890"/>
<rect x="964.4" y="241.0" width="9.8" height="1.4" fill="#42d4dc"/>
<rect x="1306.9" y="175.6" width="11.8" height="5.0" fill="#1fb9c4"/>
<rect x="1306.9" y="175.6" width="2.4" height="5.0" fill="#128890"/>
<rect x="1306.9" y="175.6" width="11.8" height="1.6" fill="#42d4dc"/>
<rect x="545.8" y="420.0" width="10.5" height="9.0" fill="#1fb9c4"/>
<rect x="545.8" y="420.0" width="2.4" height="9.0" fill="#128890"/>
<rect x="545.8" y="420.0" width="10.5" height="1.6" fill="#42d4dc"/>
<text x="605.4" y="299.8" fill="#ff0000" font-family="'Liberation Sans',sans-serif" font-size="20" letter-spacing="-0.52">BH 1 (5)</text>
<text x="511.8" y="417.5" fill="#ff0000" font-family="'Liberation Sans',sans-serif" font-size="20" letter-spacing="-0.52">BH 1 (2)</text>
<text x="717.0" y="312.6" fill="#ff0000" font-family="'Liberation Sans',sans-serif" font-size="20" letter-spacing="-0.52">BH 1</text>
<text x="798.6" y="323.8" fill="#ff0000" font-family="'Liberation Sans',sans-serif" font-size="20" letter-spacing="-0.52">BH 1 (4)</text>
<text x="941.4" y="238.5" fill="#ff0000" font-family="'Liberation Sans',sans-serif" font-size="20" letter-spacing="-0.52">Red 1</text>
<text x="1273.2" y="173.6" fill="#ff0000" font-family="'Liberation Sans',sans-serif" font-size="20" letter-spacing="-0.52">BH 1 (3)</text>
<path d="M623.5 750.8C630 749 655 748.6 667.5 751.2C655 752.6 640 752.6 623.5 750.8ZM632 750.2C640 751.4 652 751.6 660 750.6" fill="none" stroke="#1fa8f0" stroke-width="0.9"/>
</svg>
</div>
<!-- RIGHT PANEL -->
<div class="vline" style="left:1783px;top:107px;height:947px"></div>
<div id="rightp" class="abs">
  <div class="tab" style="left:4px;top:4px;width:127px;height:20px"></div>
  <div class="t" style="left:7px;top:6px">Frames</div>
  <div class="abs" style="left:117px;top:16px;width:6px;height:2px;background:#000"></div>
  <div class="sel" style="left:8px;top:254px;width:119px;height:22px"></div>
  <div class="t fi" style="top:31px">Project</div>
  <div class="t fi" style="top:53px">Settings</div>
  <div class="t fi" style="top:75px">Templates</div>
  <div class="sep" style="left:10px;top:97px;width:115px"></div>
  <div class="t fi" style="top:104px">Construction Site</div>
  <div class="sep" style="left:10px;top:126px;width:115px"></div>
  <div class="t fi" style="top:133px">Terrain Points</div>
  <div class="t fi" style="top:155px">Terrain Edges</div>
  <div class="sep" style="left:10px;top:177px;width:115px"></div>
  <div class="t fi" style="top:184px">Field Tests</div>
  <div class="t fi" style="top:206px">Soils</div>
  <div class="t fi" style="top:228px">Soil Profiles</div>
  <div class="sep" style="left:10px;top:250px;width:115px"></div>
  <div class="t fi" style="top:257px">Geological Model</div>
  <div class="t fi" style="top:279px">Output Profiles</div>
  <div class="t fi" style="top:301px">Output Sections</div>
  <svg class="abs" style="left:0;top:0" width="135" height="330" viewBox="1784 107 135 330">
    <!-- project -->
    <rect x="1798.5" y="139.5" width="11" height="13" fill="#fff" stroke="#111"/>
    <path d="M1800.5 142.5H1807.5M1800.5 144.5H1807.5M1800.5 146.5H1807.5M1800.5 148.5H1807.5M1800.5 150.5H1807.5" stroke="#111" stroke-width="1"/>
    <!-- settings gear -->
    <g transform="translate(1804 168)"><path d="M-1.36 -4.39L-1.12 -6.91L1.12 -6.91L1.36 -4.39L2.15 -4.07L4.10 -5.68L5.68 -4.10L4.07 -2.15L4.39 -1.36L6.91 -1.12L6.91 1.12L4.39 1.36L4.07 2.15L5.68 4.10L4.10 5.68L2.15 4.07L1.36 4.39L1.12 6.91L-1.12 6.91L-1.36 4.39L-2.15 4.07L-4.10 5.68L-5.68 4.10L-4.07 2.15L-4.39 1.36L-6.91 1.12L-6.91 -1.12L-4.39 -1.36L-4.07 -2.15L-5.68 -4.10L-4.10 -5.68L-2.15 -4.07Z" fill="#111"/><circle r="2.6" fill="#ff0"/></g>
    <!-- templates -->
    <rect x="1798.5" y="183.5" width="11" height="13" fill="#fff" stroke="#111"/>
    <rect x="1798.5" y="183.5" width="11" height="2.6" fill="#111"/><path d="M1798.5 186.5H1809.5M1805.5 186.5V196.5" stroke="#111"/>
    <rect x="1800" y="188" width="4" height="3" fill="#e02020"/><rect x="1800" y="191" width="4" height="2" fill="#f0d000"/><rect x="1800" y="193" width="4" height="2" fill="#20b020"/>
    <path d="M1807 189.5H1808.5M1807 192.5H1808.5" stroke="#111"/>
    <!-- construction site -->
    <path d="M1798.5 212.5H1805.5V218.5H1810.5V225.5H1798.5Z" fill="#c8c878" stroke="#111" stroke-width="1.2"/>
    <g fill="#111"><rect x="1797.5" y="211.5" width="2" height="2"/><rect x="1804.5" y="211.5" width="2" height="2"/><rect x="1809.5" y="217.5" width="2" height="2"/><rect x="1809.5" y="224.5" width="2" height="2"/><rect x="1797.5" y="224.5" width="2" height="2"/></g>
    <!-- terrain points -->
    <path d="M1797 240L1811 255M1811 240L1797 255" stroke="#333" stroke-width="0.8"/>
    <circle cx="1804" cy="247.5" r="2.6" fill="#fff" stroke="#111" stroke-width="0.9"/>
    <!-- terrain edges -->
    <path d="M1798.5 275.5L1809.5 263.5" stroke="#ff00ff" stroke-width="1.8"/>
    <circle cx="1798" cy="276" r="1.7" fill="#fff" stroke="#111" stroke-width="0.9"/><circle cx="1810" cy="263" r="1.7" fill="#fff" stroke="#111" stroke-width="0.9"/>
    <!-- field tests -->
    <path d="M1802 292.5V305.5H1809.5" stroke="#111" stroke-width="1.2" fill="none"/>
    <path d="M1802.6 294L1804.5 296V297.5H1805.5V299.5H1806.8V301.5H1808V303.5H1809V305H1802.6Z" fill="#ff00ff"/>
    <path d="M1802 292.5L1808.8 303.8" stroke="#111" stroke-width="0.9"/><path d="M1802 296.5H1804.5M1802 299.5H1806.5M1802 302.5H1808" stroke="#111" stroke-width="0.8"/>
    <!-- soils -->
    <rect x="1798.5" y="314.5" width="10" height="13" fill="#ffff00" stroke="#111" stroke-width="1.2"/>
    <path d="M1799 319L1803 314.5M1799 323.5L1807.5 314.5M1799.5 327L1808.5 317.5M1803.5 327.5L1808.5 322M1807 327.5L1808.5 326" stroke="#111" stroke-width="0.9"/>
    <path d="M1809.5 316V328.5H1799.5" stroke="#111" stroke-width="1" fill="none"/>
    <!-- soil profiles -->
    <path d="M1797 342.5H1811" stroke="#a00000" stroke-width="1"/>
    <path d="M1797.5 344V349.5H1811.5V344" stroke="#444" stroke-width="1" stroke-dasharray="1 1" fill="none"/>
    <path d="M1804 348V339" stroke="#ff00ff" stroke-width="1.4"/><path d="M1804 336.5L1806.6 340.5H1801.4Z" fill="#ff00ff"/>
    <!-- geological model -->
    <path d="M1798.5 365V378M1809.5 365V378" stroke="#111" stroke-width="1.2"/>
    <path d="M1798.5 380.5L1796.8 377H1800.2ZM1809.5 380.5L1807.8 377H1811.2Z" fill="#111" stroke="#111" stroke-width="0.8"/>
    <path d="M1800 366.5C1803 365 1805 367 1808 365.5V368.5C1805 370 1803 368 1800 369.5Z" fill="#30b0b0" stroke="#111" stroke-width="0.6"/>
    <path d="M1800 369.8C1803 368.3 1805 370.3 1808 368.8V371.8C1805 373.3 1803 371.3 1800 372.8Z" fill="#d07020" stroke="#111" stroke-width="0.6"/>
    <path d="M1800 373.1C1803 371.6 1805 373.6 1808 372.1V375.4C1805 376.9 1803 374.9 1800 376.4Z" fill="#9a9a9a" stroke="#111" stroke-width="0.6"/>
    <!-- output profiles -->
    <path d="M1797 390.5H1811" stroke="#a00000" stroke-width="1"/>
    <path d="M1797.5 392V398.5H1811.5V392" stroke="#444" stroke-width="1" stroke-dasharray="1 1" fill="none"/>
    <rect x="1801.5" y="389.5" width="5" height="2" fill="#ff00ff"/><path d="M1804 390V400.5" stroke="#ff00ff" stroke-width="2.2"/>
    <!-- output sections -->
    <path d="M1797.5 414V421.5H1811.5V414" stroke="#444" stroke-width="1" stroke-dasharray="1 1" fill="none"/>
    <path d="M1797 413.5L1801 412.5L1805 411.5L1811.5 410.5" stroke="#a00000" stroke-width="1" fill="none"/>
    <path d="M1798.5 414V419.5H1801.5V413.2M1801.5 419.5H1804.5V412.4M1804.5 419.5H1807.5V411.6M1807.5 419.5H1809.5V411" stroke="#ff00ff" stroke-width="1.2" fill="none"/>
  </svg>
  <div class="abs" style="left:8px;top:576px;width:119px;height:160px;background:#c0dcc0"></div>
  <div class="t" style="left:6px;top:595px;width:119px;text-align:center">Geological model</div>
  <div class="t" style="left:6px;top:610px;width:119px;text-align:center">is generated.</div>
  <div class="tab" style="left:4px;top:740px;width:127px;height:20px"></div>
  <div class="t" style="left:7px;top:742px">Outputs</div>
  <div class="abs" style="left:117px;top:752px;width:6px;height:2px;background:#000"></div>
  <div class="btn" style="left:8px;top:764px;width:119px;height:22px"></div>
  <div class="t" style="left:31px;top:767px">Add picture</div>
  <div class="t" style="left:9px;top:792px">Geological Model :</div>
  <div class="t" style="left:100px;top:792px;width:27px;text-align:right">0</div>
  <div class="t" style="left:9px;top:814px">Total :</div>
  <div class="t" style="left:100px;top:814px;width:27px;text-align:right">0</div>
  <div class="btn" style="left:8px;top:834px;width:119px;height:22px"></div>
  <div class="t" style="left:31px;top:837px">List of pictures</div>
  <div class="sep" style="left:10px;top:863px;width:115px"></div>
  <div class="btn" style="left:8px;top:871px;width:56px;height:42px"></div>
  <div class="btn" style="left:71px;top:871px;width:56px;height:42px"></div>
  <div class="btn" style="left:8px;top:917px;width:119px;height:22px"></div>
  <div class="t" style="left:31px;top:920px">Copy view</div>
  <svg class="abs" style="left:0;top:740px" width="135" height="206" viewBox="1784 847 135 206">
    <!-- add picture icon -->
    <rect x="1796.500" y="874.500" width="14" height="15" fill="#e8e8e8" stroke="#555"/>
    <path d="M1799.500 877V887M1799.500 877.500H1802.500V881.500H1799.500M1799.500 887.500H1804.500V883.500H1799.500" stroke="#111" stroke-width="1" fill="none"/>
    <path d="M1807 875V881M1804 878H1810" stroke="#10a010" stroke-width="2"/>
    <!-- list of pictures icon -->
    <rect x="1796.500" y="944.500" width="14" height="15" fill="#e8e8e8" stroke="#555"/>
    <path d="M1799.500 947V957M1799.500 947.500H1802.500V951.500H1799.500M1799.500 957.500H1804.500V953.500H1799.500" stroke="#111" stroke-width="1" fill="none"/>
    <path d="M1804 946.500H1809M1804 948.500H1809M1804 950.500H1809" stroke="#111" stroke-width="1" stroke-dasharray="2 1"/>
    <!-- printers -->
    <g id="prn">
      <rect x="1811.500" y="985.500" width="17" height="9" fill="#fff" stroke="#222"/>
      <path d="M1810.500 991.500L1808.500 994.500V1004.500H1812.500V1000.500H1827.500V1004.500H1831.500V994.500L1829.500 991.500Z" fill="#c8ac7c" stroke="#222" stroke-linejoin="round"/>
      <rect x="1811.500" y="996.500" width="17" height="2" fill="#222"/>
      <rect x="1812.500" y="999.500" width="15" height="13" fill="#fff" stroke="#222"/>
    </g>
    <path d="M1815 1002.500H1825M1815 1005.500H1825M1815 1008.500H1825" stroke="#111" stroke-width="1"/>
    <path d="M1815 1010.500H1825" stroke="#111" stroke-width="1" stroke-dasharray="1 1"/>
    <use href="#prn" x="63"/>
    <path d="M1879.500 1001.500H1877.500V1009.500H1879.500" stroke="#e00000" stroke-width="1.2" fill="none"/>
    <path d="M1881 1001.500H1888.500V1005.500H1884.500V1003.500M1885.500 1005.500V1009.500H1888.500V1007" stroke="#e00000" stroke-width="1.2" fill="none"/>
    <!-- copy view icon -->
    <rect x="1796.500" y="1028.500" width="7" height="8" fill="#e8e8e8" stroke="#333"/>
    <path d="M1798.500 1030.500V1034.500H1801.500V1032.500H1798.500" stroke="#111" stroke-width="0.9" fill="none"/>
    <rect x="1805.500" y="1037.500" width="6" height="5" fill="#fff" stroke="#333"/><path d="M1805.500 1039.500H1811.500" stroke="#333"/>
    <path d="M1806 1031H1808.500V1035" stroke="#10a010" stroke-width="1.3" fill="none"/><path d="M1808.500 1036.500L1806.800 1034H1810.200Z" fill="#10a010"/>
  </svg>
</div>
<!-- BOTTOM PANEL -->
<div class="hline" style="left:1px;top:812px;width:1782px"></div>
<div id="bottomp" class="abs">
<div class="tab" style="left:4px;top:8px;width:20px;height:229px"></div>
<div class="abs" style="left:16px;top:16px;width:2px;height:5px;background:#000"></div>
<div class="vt" style="left:6px;top:234px">Geological Model</div>
<div class="btn" style="left:31px;top:16px;width:129px;height:22px"></div>
<svg class="abs" style="left:0;top:0;z-index:3" width="1782" height="110" viewBox="1 813 1782 110">
<!-- plus 1 -->
<path id="plus" d="M42.3 834.6H45.7V838.3H49.6V841.7H45.7V845.6H42.3V841.7H38.4V838.3H42.3Z" fill="#80c000" stroke="#3c9000" stroke-width="0.9" stroke-linejoin="round"/>
<!-- mouse -->
<g transform="rotate(40 59.2 840.6)">
  <ellipse cx="59.2" cy="840.6" rx="4.4" ry="6.8" fill="#fff" stroke="#111" stroke-width="1"/>
  <path d="M54.8 839.2C55 836 56.6 834 59.2 833.8V839.2Z" fill="#60b000" stroke="#111" stroke-width="0.8"/>
  <path d="M54.8 839.2H63.6M59.2 833.8V839.2" stroke="#111" stroke-width="0.8" fill="none"/>
</g>
<path d="M63.4 835.2C64.5 833 67 832.6 68.3 834L70 836" fill="none" stroke="#111" stroke-width="0.9"/>
<!-- plus 2 -->
<use href="#plus" x="135.9"/>
<!-- keyboard -->
<rect x="188.5" y="836.5" width="17" height="10" rx="1.5" fill="#fff" stroke="#111" stroke-width="1"/>
<path d="M197 836.5C197 834 199 833.5 202.5 832.5" fill="none" stroke="#111" stroke-width="0.9"/>
<path d="M190.5 838.8H192.5M193.5 838.8H195.5M199.5 838.8H201.5M190.5 841.6H192M196 841.6H198M201.5 841.6H203.5" stroke="#000" stroke-width="1.7"/>
<path d="M196.5 838.8H198.5M202.5 838.8H204M193 841.6H195M199 841.6H200.5" stroke="#10a010" stroke-width="1.7"/>
<path d="M191.5 844.4H202.5" stroke="#000" stroke-width="1.5"/>
<!-- chip -->
<path d="M60.5 865V894M63 865V894M65.5 865V894M68 865V894M70.5 865V894M73 865V894M75.5 865V894M55 870.5H83M55 873H83M55 875.5H83M55 878H83M55 880.5H83M55 883H83M55 885.5H83" stroke="#111" stroke-width="1"/>
<rect x="58.5" y="868.5" width="20.5" height="20.5" fill="#111"/>
<rect x="62.5" y="872.5" width="12.5" height="12.5" fill="none" stroke="#fff" stroke-width="1"/>
<path d="M66 876.5H67.5M68.5 876.5H70M71 876.5H72.5M66 879H70M71 879H72" stroke="#fff" stroke-width="1"/>
<circle cx="76.8" cy="887.3" r="6.9" fill="#18a018" stroke="#e1e1e1" stroke-width="1"/>
<circle cx="76.8" cy="887.3" r="5" fill="#18a018" stroke="#fff" stroke-width="0"/>
<path d="M74.4 883.5L81.3 887.3L74.4 891.1Z" fill="#fff"/>
<!-- model again -->
<rect x="1689.7" y="833.6" width="2.6" height="12.6" fill="#10a810" stroke="#000" stroke-width="1.3"/>
<rect x="1700.3" y="833.6" width="2.3" height="12.6" fill="#fff" stroke="#000" stroke-width="1.3"/>
<circle cx="1696.1" cy="842" r="4.2" fill="#fff" stroke="#000" stroke-width="1.3"/>
<path d="M1693.3 841.1H1696.2V839.3L1699.3 842L1696.2 844.7V842.9H1693.3Z" fill="#10a010"/>
</svg>
<div class="t" style="left:74px;top:19px">Add graphically</div>
<div class="btn" style="left:167px;top:16px;width:115px;height:22px"></div>
<div class="t" style="left:210px;top:19px">Add textually</div>
<div class="btn" style="left:1683px;top:16px;width:92px;height:22px"></div>
<div class="t" style="left:1706px;top:19px">Model again</div>
<div class="btn" style="left:31px;top:46px;width:64px;height:58px"></div>
<div class="abs" style="left:32px;top:47px;width:11px;height:56px;background:#00c000"></div>
<div class="t" style="left:43px;top:85px;width:52px;text-align:center;letter-spacing:-0.25px">Generate</div>
<div class="abs" style="left:113px;top:46px;width:932px;height:183px;background:#fff;border:1px solid #000;box-sizing:border-box"></div>
<div class="abs" style="left:114px;top:47px;width:910px;height:39px;background:#f0f0f0"></div>
<div class="abs" style="left:114px;top:87px;width:57px;height:140px;background:#f0f0f0"></div>
<div class="abs" style="left:1025px;top:47px;width:19px;height:180px;background:#f0f0f0"></div>
<div class="abs" style="left:675px;top:87px;width:53px;height:19px;background:#90ee90"></div>
<div class="abs" style="left:675px;top:107px;width:53px;height:19px;background:#f0e8a8"></div>
<div class="abs" style="left:675px;top:127px;width:53px;height:19px;background:#f0e8a8"></div>
<div class="abs" style="left:675px;top:147px;width:53px;height:19px;background:#f0e8a8"></div>
<div class="abs" style="left:675px;top:167px;width:53px;height:19px;background:#f0e8a8"></div>
<div class="abs" style="left:675px;top:187px;width:53px;height:19px;background:#f0e8a8"></div>
<div class="hline" style="left:114px;top:86px;width:911px"></div>
<div class="hline" style="left:114px;top:106px;width:911px;background:#707070"></div>
<div class="hline" style="left:114px;top:126px;width:911px;background:#707070"></div>
<div class="hline" style="left:114px;top:146px;width:911px;background:#707070"></div>
<div class="hline" style="left:114px;top:166px;width:911px;background:#707070"></div>
<div class="hline" style="left:114px;top:186px;width:911px;background:#707070"></div>
<div class="hline" style="left:114px;top:206px;width:911px"></div>
<div class="vline" style="left:171px;top:47px;height:160px;background:#000"></div>
<div class="vline" style="left:572px;top:47px;height:160px;background:#707070"></div>
<div class="vline" style="left:623px;top:47px;height:160px;background:#707070"></div>
<div class="vline" style="left:674px;top:47px;height:160px;background:#707070"></div>
<div class="vline" style="left:728px;top:47px;height:160px;background:#707070"></div>
<div class="vline" style="left:802px;top:66px;height:141px;background:#707070"></div>
<div class="vline" style="left:876px;top:66px;height:141px;background:#707070"></div>
<div class="vline" style="left:950px;top:47px;height:160px;background:#707070"></div>
<div class="vline" style="left:1024px;top:47px;height:160px;background:#000"></div>
<div class="t" style="left:114px;top:49px;width:57px;text-align:center">No.</div>
<div class="t" style="left:172px;top:49px;width:400px;text-align:center">Name</div>
<div class="t" style="left:573px;top:49px;width:50px;text-align:center">Master</div>
<div class="t" style="left:624px;top:49px;width:50px;text-align:center">Active</div>
<div class="t" style="left:675px;top:49px;width:53px;text-align:center">Status</div>
<div class="t" style="left:729px;top:49px;width:221px;text-align:center">Location</div>
<div class="t" style="left:951px;top:49px;width:73px;text-align:center">GWT depth</div>
<div class="t" style="left:729px;top:69px;width:73px;text-align:center">x [m]</div>
<div class="t" style="left:803px;top:69px;width:73px;text-align:center">y [m]</div>
<div class="t" style="left:877px;top:69px;width:73px;text-align:center">z [m]</div>
<div class="t" style="left:951px;top:69px;width:73px;text-align:center">h<span style="font-size:9px;position:relative;top:2px">GWT</span> [m]</div>
<div class="t" style="left:114px;top:89px;width:55px;text-align:right">1</div>
<div class="t" style="left:175px;top:89px">BH 1</div>
<div class="t" style="left:678px;top:89px">Original</div>
<div class="t" style="left:740px;top:89px;width:60px;text-align:right">5,00</div>
<div class="t" style="left:814px;top:89px;width:60px;text-align:right">5,00</div>
<div class="t" style="left:888px;top:89px;width:60px;text-align:right">2,24</div>
<div class="t" style="left:114px;top:109px;width:55px;text-align:right">2</div>
<div class="t" style="left:175px;top:109px">BH 1 (2)</div>
<div class="t" style="left:678px;top:109px">New</div>
<div class="t" style="left:740px;top:109px;width:60px;text-align:right">0,00</div>
<div class="t" style="left:814px;top:109px;width:60px;text-align:right">5,00</div>
<div class="t" style="left:888px;top:109px;width:60px;text-align:right">0,00</div>
<div class="t" style="left:114px;top:129px;width:55px;text-align:right">3</div>
<div class="t" style="left:175px;top:129px">BH 1 (3)</div>
<div class="t" style="left:678px;top:129px">New</div>
<div class="t" style="left:740px;top:129px;width:60px;text-align:right">20,00</div>
<div class="t" style="left:814px;top:129px;width:60px;text-align:right">5,00</div>
<div class="t" style="left:888px;top:129px;width:60px;text-align:right">5,00</div>
<div class="t" style="left:114px;top:149px;width:55px;text-align:right">4</div>
<div class="t" style="left:175px;top:149px">BH 1 (4)</div>
<div class="t" style="left:678px;top:149px">New</div>
<div class="t" style="left:740px;top:149px;width:60px;text-align:right">5,00</div>
<div class="t" style="left:814px;top:149px;width:60px;text-align:right">0,50</div>
<div class="t" style="left:888px;top:149px;width:60px;text-align:right">2,24</div>
<div class="t" style="left:114px;top:169px;width:55px;text-align:right">5</div>
<div class="t" style="left:175px;top:169px">BH 1 (5)</div>
<div class="t" style="left:678px;top:169px">New</div>
<div class="t" style="left:740px;top:169px;width:60px;text-align:right">5,00</div>
<div class="t" style="left:814px;top:169px;width:60px;text-align:right">9,50</div>
<div class="t" style="left:888px;top:169px;width:60px;text-align:right">2,32</div>
<div class="t" style="left:114px;top:189px;width:55px;text-align:right">6</div>
<div class="t" style="left:175px;top:189px">Red 1</div>
<div class="t" style="left:678px;top:189px">New</div>
<div class="t" style="left:740px;top:189px;width:60px;text-align:right">11,00</div>
<div class="t" style="left:814px;top:189px;width:60px;text-align:right">5,00</div>
<div class="t" style="left:888px;top:189px;width:60px;text-align:right">3,77</div>
<svg class="abs" style="left:0;top:0" width="1782" height="240" viewBox="1 813 1782 240">
<path d="M124.8 907.4L126.6 907.4L129.8 910.5L126.6 913.6H124.8L127.8 910.5Z" fill="#000" stroke="#000" stroke-width="0.9" stroke-linejoin="round"/>
<circle cx="598.5" cy="909.8" r="5.5" fill="#fff" stroke="#000" stroke-width="1.6"/>
<circle cx="598.5" cy="909.8" r="2.6" fill="#000"/>
<path d="M645.5 910L648 912.5L653.5 906.5" fill="none" stroke="#000" stroke-width="1.4"/>
<circle cx="598.5" cy="929.8" r="5.5" fill="#fff" stroke="#000" stroke-width="1.6"/>
<rect x="643.8" y="924.2" width="11" height="11" fill="#fff" stroke="#000" stroke-width="1.5"/>
<path d="M646 929.6L648.6 932.6L653 926.2" fill="none" stroke="#000" stroke-width="1.8"/>
<circle cx="598.5" cy="949.8" r="5.5" fill="#fff" stroke="#000" stroke-width="1.6"/>
<rect x="643.8" y="944.2" width="11" height="11" fill="#fff" stroke="#000" stroke-width="1.5"/>
<path d="M646 949.6L648.6 952.6L653 946.2" fill="none" stroke="#000" stroke-width="1.8"/>
<circle cx="598.5" cy="969.8" r="5.5" fill="#fff" stroke="#000" stroke-width="1.6"/>
<rect x="643.8" y="964.2" width="11" height="11" fill="#fff" stroke="#000" stroke-width="1.5"/>
<path d="M646 969.6L648.6 972.6L653 966.2" fill="none" stroke="#000" stroke-width="1.8"/>
<circle cx="598.5" cy="989.8" r="5.5" fill="#fff" stroke="#000" stroke-width="1.6"/>
<rect x="643.8" y="984.2" width="11" height="11" fill="#fff" stroke="#000" stroke-width="1.5"/>
<path d="M646 989.6L648.6 992.6L653 986.2" fill="none" stroke="#000" stroke-width="1.8"/>
<circle cx="598.5" cy="1009.8" r="5.5" fill="#fff" stroke="#000" stroke-width="1.6"/>
<rect x="643.8" y="1004.2" width="11" height="11" fill="#fff" stroke="#000" stroke-width="1.5"/>
<path d="M646 1009.6L648.6 1012.6L653 1006.2" fill="none" stroke="#000" stroke-width="1.8"/>
<path d="M1030 912H1041L1035.5 906Z" fill="#c8c8c8"/><path d="M1030 1029H1041L1035.5 1035Z" fill="#c8c8c8"/>

</svg>
<div class="abs" style="left:1063px;top:46px;width:175px;height:183px;background:#fff;border:1px solid #adadad;box-sizing:border-box"></div>
<div class="t" style="left:1256px;top:48px;width:298px;text-align:center;font-weight:bold">Generating of interfaces between layers</div>
<div class="abs" style="left:1256px;top:72px;width:298px;height:157px;background:#f0f0f0;border:1px solid #adadad;box-sizing:border-box"></div>
<div class="abs" style="left:1257px;top:114px;width:275px;height:113px;background:#fff"></div>
<div class="hline" style="left:1257px;top:113px;width:275px"></div>
<div class="hline" style="left:1257px;top:133px;width:275px;background:#707070"></div>
<div class="hline" style="left:1257px;top:153px;width:275px;background:#707070"></div>
<div class="hline" style="left:1257px;top:173px;width:275px"></div>
<div class="vline" style="left:1424px;top:74px;height:100px;background:#707070"></div>
<div class="vline" style="left:1466px;top:74px;height:100px;background:#707070"></div>
<div class="vline" style="left:1531px;top:74px;height:100px;background:#000"></div>
<div class="t" style="left:1257px;top:76px;width:167px;text-align:center">Interface</div>
<div class="t" style="left:1257px;top:96px;width:167px;text-align:center">between layers</div>
<div class="t" style="left:1425px;top:76px;width:41px;text-align:center">Group</div>
<div class="t" style="left:1425px;top:96px;width:41px;text-align:center">order</div>
<div class="t" style="left:1467px;top:76px;width:64px;text-align:center">Smoothing</div>
<svg class="abs" style="left:0;top:0" width="1782" height="240" viewBox="1 813 1782 240"><defs>
<pattern id="swb" width="5" height="5" patternUnits="userSpaceOnUse"><rect width="5" height="5" fill="#78b8e8"/><path d="M-1 6L6 -1M-1 1L1 -1M4 6L6 4" stroke="#2868a8" stroke-width="0.7"/></pattern>
<pattern id="swg" width="5" height="5" patternUnits="userSpaceOnUse"><rect width="5" height="5" fill="#78e078"/><path d="M-1 6L6 -1M-1 1L1 -1M4 6L6 4" stroke="#28a028" stroke-width="0.7"/></pattern>
<pattern id="swr" width="5" height="5" patternUnits="userSpaceOnUse"><rect width="5" height="5" fill="#ff7878"/><path d="M-1 6L6 -1M-1 1L1 -1M4 6L6 4" stroke="#d02020" stroke-width="0.7"/></pattern>
<pattern id="swn" width="5" height="5" patternUnits="userSpaceOnUse"><rect width="5" height="5" fill="#c09868"/><path d="M-1 6L6 -1M-1 1L1 -1M4 6L6 4" stroke="#704818" stroke-width="0.7"/></pattern>
</defs>
<rect x="1313.5" y="929.5" width="52" height="14" fill="url(#swb)" stroke="#000" stroke-width="1"/>
<rect x="1370.5" y="929.5" width="52" height="14" fill="url(#swg)" stroke="#000" stroke-width="1"/>
<rect x="1493.8" y="931.0" width="11" height="11" fill="#fff" stroke="#000" stroke-width="1.5"/>
<path d="M1496 936.4L1498.6 939.4L1503 933.0" fill="none" stroke="#000" stroke-width="1.8"/>
<rect x="1313.5" y="949.5" width="52" height="14" fill="url(#swg)" stroke="#000" stroke-width="1"/>
<rect x="1370.5" y="949.5" width="52" height="14" fill="url(#swr)" stroke="#000" stroke-width="1"/>
<rect x="1493.8" y="951.0" width="11" height="11" fill="#fff" stroke="#000" stroke-width="1.5"/>
<path d="M1496 956.4L1498.6 959.4L1503 953.0" fill="none" stroke="#000" stroke-width="1.8"/>
<rect x="1313.5" y="969.5" width="52" height="14" fill="url(#swr)" stroke="#000" stroke-width="1"/>
<rect x="1370.5" y="969.5" width="52" height="14" fill="url(#swn)" stroke="#000" stroke-width="1"/>
<rect x="1493.8" y="971.0" width="11" height="11" fill="#fff" stroke="#000" stroke-width="1.5"/>
<path d="M1496 976.4L1498.6 979.4L1503 973.0" fill="none" stroke="#000" stroke-width="1.8"/>
<path d="M1538 939H1549L1543.5 933Z" fill="#c8c8c8"/><path d="M1538 1028H1549L1543.5 1034Z" fill="#c8c8c8"/></svg>
<div class="t" style="left:1259px;top:116px;width:50px;text-align:center">1 - 2</div>
<div class="t" style="left:1433px;top:116px;width:30px;text-align:right">1</div>
<div class="t" style="left:1259px;top:136px;width:50px;text-align:center">2 - 3</div>
<div class="t" style="left:1433px;top:136px;width:30px;text-align:right">1</div>
<div class="t" style="left:1259px;top:156px;width:50px;text-align:center">3 - 4</div>
<div class="t" style="left:1433px;top:156px;width:30px;text-align:right">1</div>
</div>
<!-- STATUS BAR -->
<div id="status" class="abs"></div>
<svg class="abs" style="left:1903px;top:1062px" width="14" height="14" viewBox="0 0 14 14"><g fill="#bfbfbf"><rect x="10" y="1" width="2" height="2"/><rect x="7" y="4" width="2" height="2"/><rect x="10" y="4" width="2" height="2"/><rect x="4" y="7" width="2" height="2"/><rect x="7" y="7" width="2" height="2"/><rect x="10" y="7" width="2" height="2"/><rect x="1" y="10" width="2" height="2"/><rect x="4" y="10" width="2" height="2"/><rect x="7" y="10" width="2" height="2"/><rect x="10" y="10" width="2" height="2"/></g></svg>
<!-- WINDOW BORDER -->
<div class="bl" style="left:0;top:31px;width:1px;height:1049px"></div>
<div class="bl" style="left:1919px;top:31px;width:1px;height:1049px"></div>
<div class="bl" style="left:0;top:1079px;width:1920px;height:1px"></div>
</body>
</html>
